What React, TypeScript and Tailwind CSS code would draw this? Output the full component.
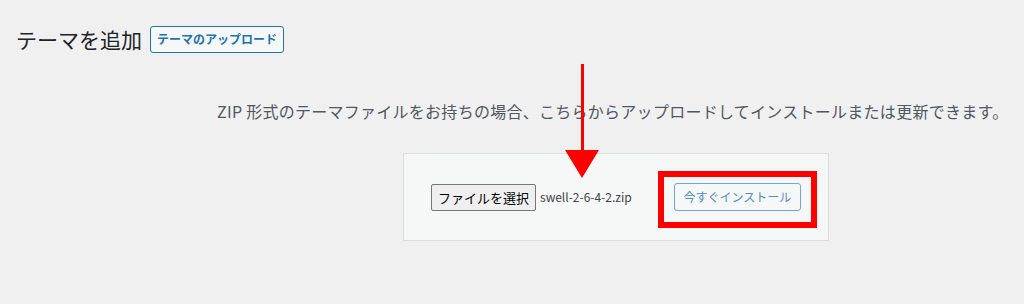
import React from 'react';

const font = { fontFamily: '"Noto Sans CJK JP", "Noto Sans", sans-serif' };

const App: React.FC = () => {
  return (
    <div
      className="relative w-[1024px] h-[304px] overflow-hidden bg-[#f0f0f1] text-[#1d2327]"
      style={font}
    >
      {/* Header */}
      <div className="flex items-center pt-[17px] pl-[16px] h-[44px] box-content">
        <h1 className="text-[21px] leading-[27px] font-normal text-[#1d2327]">テーマを追加</h1>
        <button className="ml-[8px] h-[27px] px-[6px] bg-[#f6f7f7] border border-[#2271b1] rounded-[3px] text-[12px] font-bold text-[#2271b1] leading-none">
          テーマのアップロード
        </button>
      </div>

      {/* Description */}
      <p className="mt-[38px] pl-[217px] text-[16px] leading-[24px] tracking-[0.27px] text-[#50575e] whitespace-nowrap">
        ZIP 形式のテーマファイルをお持ちの場合、こちらからアップロードしてインストールまたは更新できます。
      </p>

      {/* Upload form */}
      <div className="mt-[30px] ml-[403px] w-[426px] h-[88px] bg-[#f6f7f7] border border-[#dcdcde] flex items-center pl-[27px] pr-[27px]">
        <button className="h-[27px] px-[6px] bg-[#efefef] border border-[#767676] rounded-[2px] text-[13px] text-black leading-none">
          ファイルを選択
        </button>
        <span className="ml-[4px] text-[12px] text-[#3c434a]">swell-2-6-4-2.zip</span>
        <button className="ml-auto h-[28px] w-[127px] bg-[#f6f7f7] border border-[#72a6d9] rounded-[3px] text-[12px] text-[#4f8cc9] leading-none">
          今すぐインストール
        </button>
      </div>

      {/* Annotation: arrow */}
      <svg className="absolute left-[560px] top-[60px]" width="44" height="122" viewBox="0 0 44 122">
        <rect x="21" y="4" width="3" height="88" fill="#ff0000" />
        <polygon points="5,90 39,90 22,118" fill="#ff0000" />
      </svg>

      {/* Annotation: highlight box */}
      <div className="absolute left-[658px] top-[171px] w-[159px] h-[57px] border-[6px] border-[#ff0000]" />
    </div>
  );
};

export default App;
